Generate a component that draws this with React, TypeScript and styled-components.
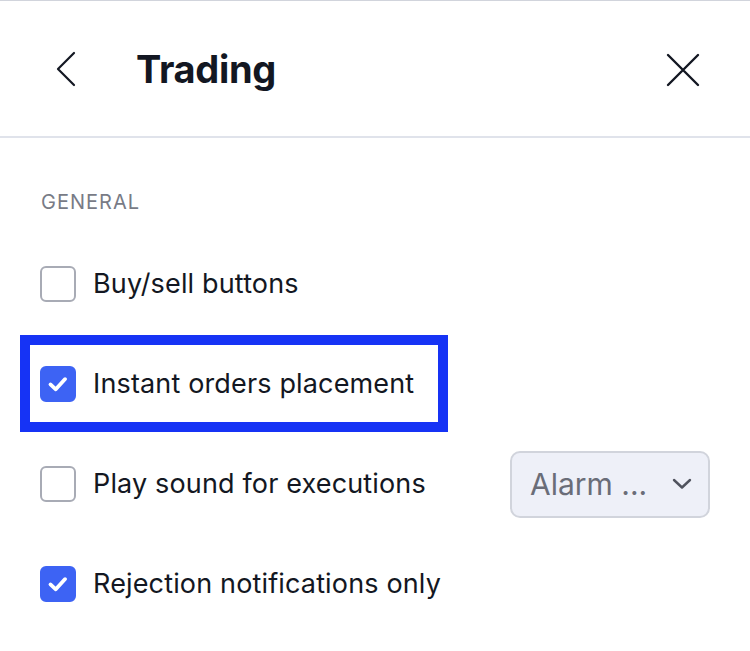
import styled, { createGlobalStyle, css } from "styled-components"

const GlobalStyle = createGlobalStyle`
  html, body {
    margin: 0;
    padding: 0;
    background: #ffffff;
  }
  body {
    font-family: Inter, "Noto Sans", "Liberation Sans", sans-serif;
    color: #131722;
    -webkit-font-smoothing: antialiased;
  }
`;

const Panel = styled.div`
  width: 750px;
  height: 651px;
  border-top: 1px solid #d1d4dc;
  box-sizing: border-box;
  overflow: hidden;
`;

const Header = styled.header`
  display: flex;
  align-items: center;
  height: 135px;
  padding: 0 40px;
  border-bottom: 2px solid #e0e3eb;
`;

const IconButton = styled.button`
  display: flex;
  align-items: center;
  justify-content: center;
  width: 44px;
  height: 44px;
  padding: 0;
  border: none;
  background: none;
  color: #131722;
  cursor: pointer;
`;

const Title = styled.h1`
  flex: 1;
  margin: 0 0 0 52px;
  font-size: 38px;
  font-weight: 700;
  letter-spacing: -0.3px;
  color: #131722;
`;

const Body = styled.div`
  padding: 49px 40px 0 40px;
`;

const SectionLabel = styled.div`
  height: 31px;
  margin-left: 1px;
  font-size: 20px;
  line-height: 31px;
  letter-spacing: 1px;
  text-transform: uppercase;
  color: #787b86;
`;

const Rows = styled.div`
  display: flex;
  flex-direction: column;
  margin-top: 16px;
`;

const Row = styled.label<{ $highlight?: boolean }>`
  position: relative;
  display: flex;
  align-items: center;
  gap: 17px;
  height: 100px;
  cursor: pointer;

  ${(p) =>
    p.$highlight &&
    css`
      width: fit-content;
      &::after {
        content: "";
        position: absolute;
        left: -20px;
        right: -34px;
        top: 1px;
        bottom: 2px;
        border: 10px solid #1633f5;
        pointer-events: none;
      }
    `}
`;

const Box = styled.span<{ $checked?: boolean }>`
  display: flex;
  align-items: center;
  justify-content: center;
  flex: none;
  width: 36px;
  height: 36px;
  box-sizing: border-box;
  border-radius: 6px;
  border: 2px solid ${(p) => (p.$checked ? "#3d63f4" : "#a8abb5")};
  background: ${(p) => (p.$checked ? "#3d63f4" : "#ffffff")};
`;

const LabelText = styled.span`
  font-size: 27px;
  line-height: 32px;
  letter-spacing: 0.15px;
  color: #131722;
`;

const Select = styled.div`
  display: flex;
  align-items: center;
  justify-content: space-between;
  margin-left: auto;
  width: 200px;
  height: 67px;
  box-sizing: border-box;
  padding: 0 16px 0 18px;
  border: 2px solid #d1d4dc;
  border-radius: 10px;
  background: #eef0f8;
  font-size: 30px;
  color: #6a6d78;
`;

function Check() {
  return (
    <svg width="36" height="36" viewBox="0 0 36 36" fill="none">
      <path
        d="M9.5 18.5 L15.5 24 L26 12.5"
        stroke="#ffffff"
        strokeWidth="4.2"
        strokeLinecap="round"
        strokeLinejoin="round"
      />
    </svg>
  );
}

function Checkbox({ checked }: { checked?: boolean }) {
  return <Box $checked={checked}>{checked && <Check />}</Box>;
}

export default function App() {
  return (
    <>
      <GlobalStyle />
      <Panel>
        <Header>
          <IconButton aria-label="Back">
            <svg width="44" height="44" viewBox="0 0 44 44" fill="none">
              <path
                d="M34 6 L18 22 L34 38"
                stroke="currentColor"
                strokeWidth="2.2"
                strokeLinecap="round"
                strokeLinejoin="round"
              />
            </svg>
          </IconButton>
          <Title>Trading</Title>
          <IconButton aria-label="Close">
            <svg width="44" height="44" viewBox="0 0 44 44" fill="none">
              <path
                d="M2 8 L32 38 M32 8 L2 38"
                stroke="currentColor"
                strokeWidth="2.4"
                strokeLinecap="round"
              />
            </svg>
          </IconButton>
        </Header>
        <Body>
          <SectionLabel>General</SectionLabel>
          <Rows>
            <Row>
              <Checkbox />
              <LabelText>Buy/sell buttons</LabelText>
            </Row>
            <Row $highlight>
              <Checkbox checked />
              <LabelText>Instant orders placement</LabelText>
            </Row>
            <Row>
              <Checkbox />
              <LabelText>Play sound for executions</LabelText>
              <Select>
                <span>Alarm ...</span>
                <svg width="20" height="12" viewBox="0 0 20 12" fill="none">
                  <path
                    d="M2 2 L10 9.5 L18 2"
                    stroke="#50535e"
                    strokeWidth="2.4"
                    strokeLinecap="round"
                    strokeLinejoin="round"
                  />
                </svg>
              </Select>
            </Row>
            <Row>
              <Checkbox checked />
              <LabelText>Rejection notifications only</LabelText>
            </Row>
          </Rows>
        </Body>
      </Panel>
    </>
  );
}
